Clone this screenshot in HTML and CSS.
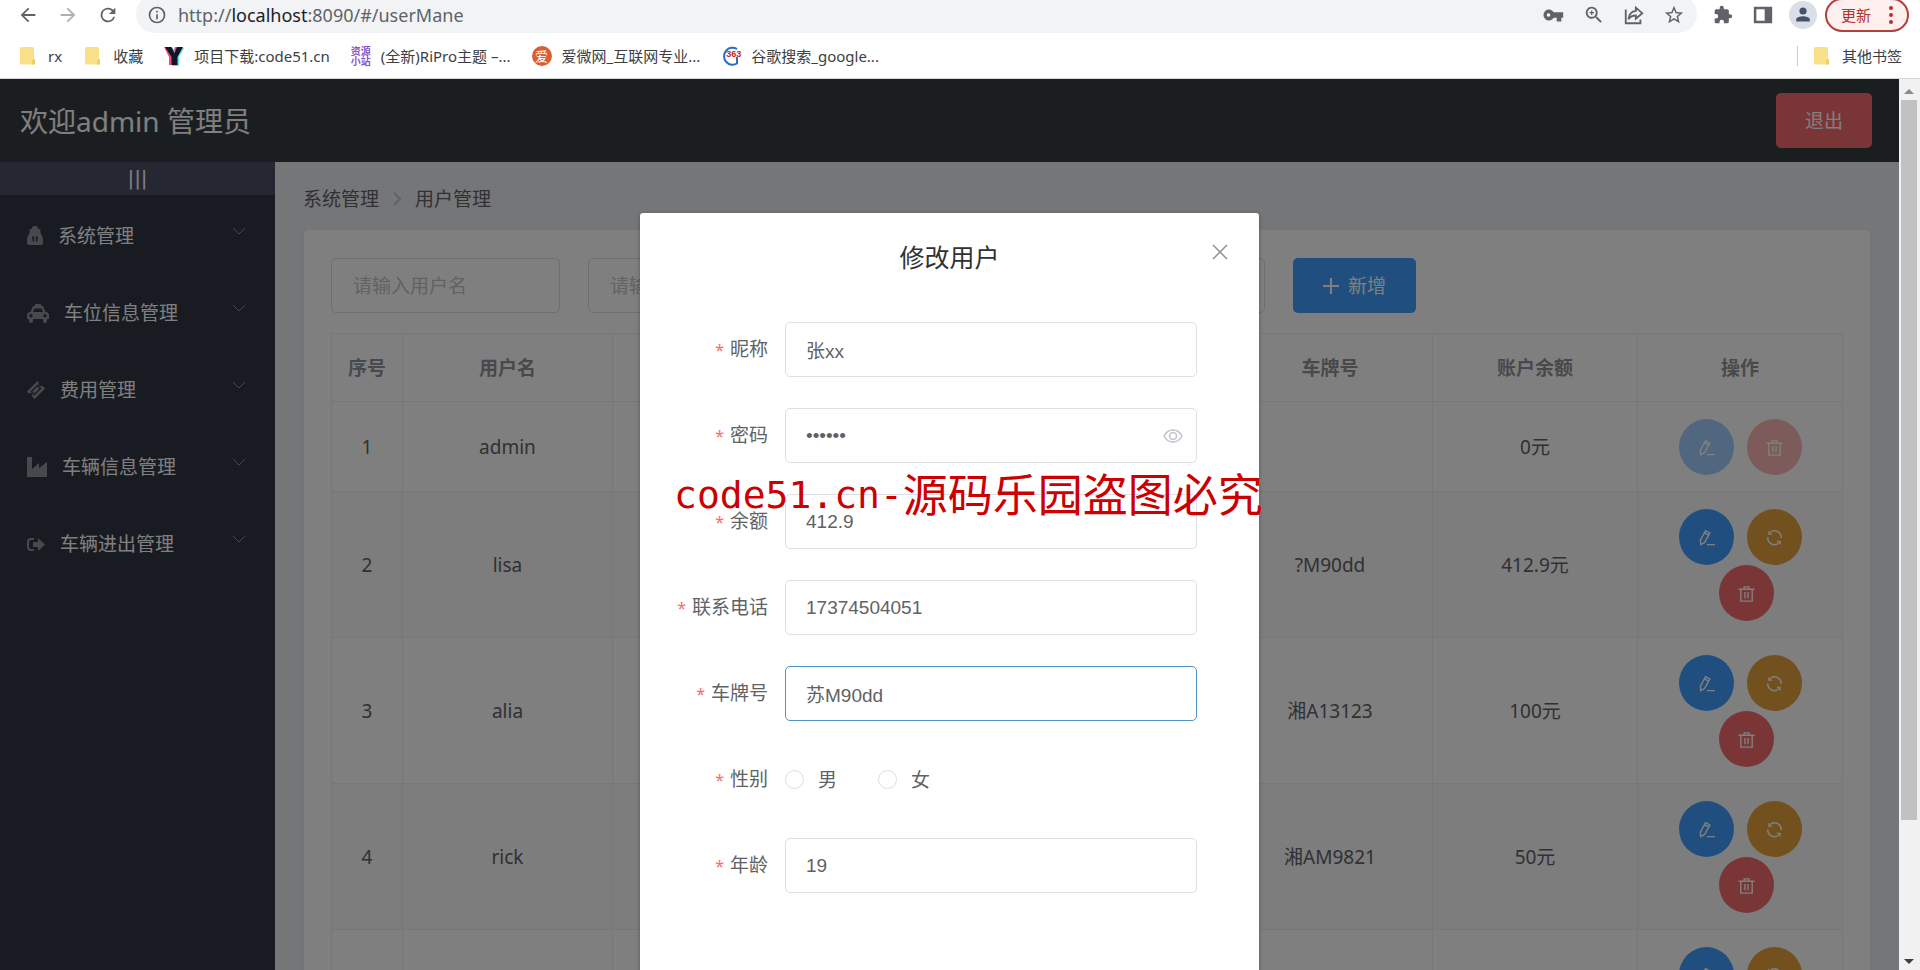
FILE: index.html
```html
<!DOCTYPE html>
<html lang="zh-CN">
<head>
<meta charset="utf-8">
<title>用户管理</title>
<link rel="stylesheet" href="styles.css">
</head>
<body>
<svg class="sprite" aria-hidden="true">
  <symbol id="edit" viewBox="0 0 20 20"><path d="M3.500 13 9 2.800l4.500 2.400L8 15.200l-4 2.300zM7.800 5l4.500 2.400M10.500 17.500h8.500" /></symbol>
  <symbol id="trash" viewBox="0 0 20 20"><path d="M1.500 5.500h17M4 5.500v12.500h12V5.500M7.500 5.500V3h5v2.500M8.400 8.500v6.500M11.600 8.500v6.500" /></symbol>
  <symbol id="refresh" viewBox="0 0 20 20"><path d="M6 4.300A7 7 0 0 1 17 10.500M14 16.200A7 7 0 0 1 3 9.500" /><path d="M3.500 2.500v4.500H8zM16.500 18v-4.500H12z" fill="#fff" stroke="none" /></symbol>
  <symbol id="down" viewBox="0 0 14 14"><path d="M1 4l6 6 6-6" /></symbol>
  <symbol id="folder" viewBox="0 0 20 20"><path d="M3.500 1h11A1.500 1.500 0 0 1 16 2.500V13h1v4.500a1 1 0 0 1-1 1H3.500A1.500 1.500 0 0 1 2 17V2.500A1.500 1.500 0 0 1 3.500 1z" fill="#fbe08a"/><path d="M14 18.500V15l1.500-2H17v4.500a1 1 0 0 1-1 1z" fill="#f0cd62"/></symbol>
</svg>

<header class="browser">
  <div class="toolbar">
    <nav class="nav-buttons">
      <button type="button" aria-label="后退"><svg class="i24" viewBox="0 0 24 24"><path d="M20 11H7.800l5.600-5.600L12 4l-8 8 8 8 1.400-1.400L7.800 13H20z"/></svg></button>
      <button type="button" class="off" aria-label="前进"><svg class="i24" viewBox="0 0 24 24"><path d="M4 11h12.200l-5.600-5.600L12 4l8 8-8 8-1.400-1.400 5.600-5.600H4z"/></svg></button>
      <button type="button" aria-label="刷新"><svg class="i24" viewBox="0 0 24 24"><path d="M17.650 6.350A8 8 0 1 0 19.730 14h-2.080A6 6 0 1 1 12 6c1.660 0 3.140.69 4.220 1.780L13 11h7V4z"/></svg></button>
    </nav>
    <div class="omnibox">
      <svg class="i20" viewBox="0 0 24 24"><path d="M11 7h2v2h-2zm0 4h2v6h-2zm1-9a10 10 0 1 0 0 20 10 10 0 0 0 0-20zm0 18a8 8 0 1 1 0-16 8 8 0 0 1 0 16z"/></svg>
      <div class="url">http://<b>localhost</b>:8090/#/userMane</div>
      <svg class="i22" viewBox="1 0 24 24"><path d="M12.650 9A6 6 0 1 0 12.650 15H16v4h5v-4h2V9zM7 14a2 2 0 1 1 0-4 2 2 0 0 1 0 4z"/></svg>
      <svg class="i22" viewBox="0 0 24 24"><path d="M15.500 14h-.79l-.28-.27A6.500 6.500 0 1 0 13.730 14.430l.27.28v.79l5 5 1.500-1.500zm-6 0a4.500 4.500 0 1 1 0-9 4.500 4.500 0 0 1 0 9zM10.200 7H8.800v1.800H7v1.400h1.800V12h1.400v-1.800H12V8.800h-1.800z"/></svg>
      <svg class="i22 line" viewBox="0 0 24 24"><path d="M3 6v15h16v-4M14 4l7 6-7 6v-3.500c-4 0-6 1-8 4 .5-5 3-8.500 8-9z"/></svg>
      <svg class="i22" viewBox="0 0 24 24"><path d="M22 9.240l-7.190-.62L12 2 9.190 8.630 2 9.240l5.460 4.730L5.820 21 12 17.270 18.180 21l-1.630-7.030zM12 15.400l-3.760 2.270 1-4.280-3.320-2.880 4.380-.38L12 6.100l1.710 4.040 4.380.38-3.320 2.880 1 4.280z"/></svg>
    </div>
    <div class="tools">
      <svg class="i20" viewBox="0 0 24 24"><path d="M20.500 11H19V7a2 2 0 0 0-2-2h-4V3.500a2.500 2.500 0 0 0-5 0V5H4a2 2 0 0 0-2 2v3.800h1.500a2.700 2.700 0 0 1 0 5.400H2V20a2 2 0 0 0 2 2h3.800v-1.500a2.700 2.700 0 0 1 5.400 0V22H17a2 2 0 0 0 2-2v-4h1.500a2.500 2.500 0 0 0 0-5z"/></svg>
      <svg class="i20" viewBox="0 0 24 24"><path fill-rule="evenodd" d="M1 2h22v20H1zM4 5v14h10V5z"/></svg>
      <span class="avatar"><svg class="i20" viewBox="0 0 20 20"><circle cx="10" cy="5" r="4.500"/><path d="M1.500 18v-2.500c0-3 5.500-4 8.500-4s8.500 1 8.500 4V18z"/></svg></span>
      <button type="button" class="update">更新<svg viewBox="0 0 4 18"><circle cx="2" cy="2" r="2"/><circle cx="2" cy="9" r="2"/><circle cx="2" cy="16" r="2"/></svg></button>
    </div>
  </div>
  <nav class="bookmarks">
    <a href="#"><svg class="i20"><use href="#folder"/></svg>rx</a>
    <a href="#"><svg class="i20"><use href="#folder"/></svg>收藏</a>
    <a href="#"><svg class="i20" viewBox="0 0 20 20"><path d="M0 1h7l2 5.500L11 1h6l-4.500 10v8H5v-8z" fill="#f2497e"/><path d="M3 2h6l2.500 5L14 2h6l-5 9v9H8v-9z" fill="#5fe0ee"/><path d="M1 1h6.500l3 6L13 1h6l-5.500 10v8h-6v-8z" fill="#151426"/></svg>项目下载:code51.cn</a>
    <a href="#"><span class="stack">资源<br>小站</span>(全新)RiPro主题 –...</a>
    <a href="#"><span class="round">爱</span>爱微网_互联网专业...</a>
    <a href="#"><span class="g363"><svg class="i20" viewBox="0 0 20 20"><path d="M16 3A8.500 8.500 0 1 0 16 17.500V11" fill="none" stroke="#2a6bd0" stroke-width="2"/></svg><i>363</i></span>谷歌搜索_google...</a>
    <a href="#" class="other"><svg class="i20"><use href="#folder"/></svg>其他书签</a>
  </nav>
</header>

<div class="viewport">
  <div class="app">
    <header class="app-head">
      <span>欢迎admin 管理员</span>
      <button type="button" class="btn danger">退出</button>
    </header>
    <div class="app-body">
      <aside class="side">
        <button type="button" class="toggle">|||</button>
        <ul class="menu">
          <li><svg class="w16" viewBox="0 0 16 20"><path fill-rule="evenodd" d="M5 1.500C5.500.5 6.500 0 8 0s2.500.5 3 1.500V3h2.500v2H13c.3 1.500.8 2.500 1.500 4C15.500 10.500 16 12 16 14v3c0 1.200-.8 2-2 2H2c-1.200 0-2-.8-2-2v-3c0-2 .5-3.500 1.500-5C2.200 7.500 2.700 6.500 3 5h-.5V3H5zM5 10.500l.8 5h1.400v-5zm3.800 0v5h1.400l.8-5z"/></svg>系统管理<svg class="arrow"><use href="#down"/></svg></li>
          <li><svg class="w22" viewBox="0 0 22 20"><path fill-rule="evenodd" d="M8 1h6v2h2l2.500 6A3.500 3.500 0 0 1 22 12v4h-2v2a2 2 0 0 1-4 0v-2H6v2a2 2 0 0 1-4 0v-2H0v-4a3.500 3.500 0 0 1 3.500-3L6 3h2zM7.500 5.500 6 9h10l-1.500-3.500zM4 11a1.700 1.700 0 1 0 0 3.400A1.700 1.700 0 0 0 4 11zm14 0a1.700 1.700 0 1 0 0 3.400 1.700 1.700 0 0 0 0-3.400z"/></svg>车位信息管理<svg class="arrow"><use href="#down"/></svg></li>
          <li><svg class="w18" viewBox="0 0 18 18"><path fill-rule="evenodd" d="M10.500 0 12 1.500a2 2 0 0 0 3 3L18 7.500 7.500 18 5 15.500a2 2 0 0 0-3-3L0 10.500zM10.500 3.500 3.500 10.500 7.500 14.500 14.500 7.500zM10.500 5.500l2 2-5 5-2-2z"/></svg>费用管理<svg class="arrow"><use href="#down"/></svg></li>
          <li><svg class="w20" viewBox="0 0 20 20"><path d="M0 0h5v12l7-6v5l8-6v15H0z"/></svg>车辆信息管理<svg class="arrow"><use href="#down"/></svg></li>
          <li><svg class="w18" viewBox="0 0 18 18"><path d="M7 3v2H4a2 2 0 0 0-2 2v5a2 2 0 0 0 2 2h3v2H4a4 4 0 0 1-4-4V7a4 4 0 0 1 4-4zM11 3l7 6.500-7 6.500v-4H6V7h5z"/></svg>车辆进出管理<svg class="arrow"><use href="#down"/></svg></li>
        </ul>
      </aside>
      <main class="main">
        <nav class="crumbs"><a href="#">系统管理</a><svg viewBox="0 0 10 16"><path d="M2 2l6 6-6 6"/></svg><span>用户管理</span></nav>
        <section class="card">
          <form class="filters">
            <input type="text" aria-label="用户名" placeholder="请输入用户名">
            <input type="text" aria-label="条件" placeholder="请输入">
            <button type="button" class="btn primary"><svg viewBox="0 0 16 16"><path d="M8 0v16M0 8h16"/></svg>新增</button>
          </form>
          <table class="grid">
            <colgroup><col class="c-no"><col class="c-name"><col><col><col><col><col><col></colgroup>
            <thead><tr><th>序号</th><th>用户名</th><th></th><th></th><th></th><th>车牌号</th><th>账户余额</th><th>操作</th></tr></thead>
            <tbody>
              <tr><td>1</td><td>admin</td><td></td><td></td><td></td><td></td><td>0元</td><td><div class="ops"><button type="button" class="op blue" disabled aria-label="编辑"><svg><use href="#edit"/></svg></button><button type="button" class="op red" disabled aria-label="删除"><svg><use href="#trash"/></svg></button></div></td></tr>
              <tr><td>2</td><td>lisa</td><td></td><td></td><td></td><td>?M90dd</td><td>412.9元</td><td><div class="ops"><button type="button" class="op blue" aria-label="编辑"><svg><use href="#edit"/></svg></button><button type="button" class="op gold" aria-label="重置"><svg><use href="#refresh"/></svg></button><button type="button" class="op red" aria-label="删除"><svg><use href="#trash"/></svg></button></div></td></tr>
              <tr><td>3</td><td>alia</td><td></td><td></td><td></td><td>湘A13123</td><td>100元</td><td><div class="ops"><button type="button" class="op blue" aria-label="编辑"><svg><use href="#edit"/></svg></button><button type="button" class="op gold" aria-label="重置"><svg><use href="#refresh"/></svg></button><button type="button" class="op red" aria-label="删除"><svg><use href="#trash"/></svg></button></div></td></tr>
              <tr><td>4</td><td>rick</td><td></td><td></td><td></td><td>湘AM9821</td><td>50元</td><td><div class="ops"><button type="button" class="op blue" aria-label="编辑"><svg><use href="#edit"/></svg></button><button type="button" class="op gold" aria-label="重置"><svg><use href="#refresh"/></svg></button><button type="button" class="op red" aria-label="删除"><svg><use href="#trash"/></svg></button></div></td></tr>
              <tr><td></td><td></td><td></td><td></td><td></td><td></td><td></td><td><div class="ops"><button type="button" class="op blue" aria-label="编辑"><svg><use href="#edit"/></svg></button><button type="button" class="op gold" aria-label="重置"><svg><use href="#refresh"/></svg></button><button type="button" class="op red" aria-label="删除"><svg><use href="#trash"/></svg></button></div></td></tr>
            </tbody>
          </table>
        </section>
      </main>
    </div>

    <div class="overlay">
      <div class="dialog" role="dialog" aria-labelledby="dlg-title">
        <h2 id="dlg-title">修改用户</h2>
        <button type="button" class="close" aria-label="关闭"><svg viewBox="0 0 16 16"><path d="M1 1l14 14M15 1 1 15"/></svg></button>
        <form class="form">
          <div class="row"><label for="nick">昵称</label><input id="nick" type="text" value="张xx"></div>
          <div class="row"><label for="pwd">密码</label><input id="pwd" type="password" value="123456"><svg class="eye" viewBox="0 0 20 20"><path d="M1 10c4-8 14-8 18 0-4 8-14 8-18 0z"/><circle cx="10" cy="10" r="3.500"/></svg></div>
          <div class="row"><label for="bal">余额</label><input id="bal" type="text" value="412.9"></div>
          <div class="row"><label for="tel">联系电话</label><input id="tel" type="text" value="17374504051"></div>
          <div class="row"><label for="plate">车牌号</label><input id="plate" class="active" type="text" value="苏M90dd"></div>
          <div class="row"><span class="label">性别</span><div class="radios"><label><input type="radio" name="sex">男</label><label><input type="radio" name="sex">女</label></div></div>
          <div class="row"><label for="age">年龄</label><input id="age" type="text" value="19"></div>
        </form>
        <p class="mark"><span>code51.cn-</span>源码乐园盗图必究</p>
      </div>
    </div>
  </div>
  <div class="scrollbar"><svg viewBox="0 0 10 6"><path d="M0 6l5-5 5 5z" fill="#8a8a8a"/></svg><div class="thumb"></div><svg viewBox="0 0 10 6"><path d="M0 0l5 5 5-5z" fill="#404040"/></svg></div>
</div>
</body>
</html>
```

FILE: styles.css
```css
* { box-sizing: border-box; }
body {
  margin: 0;
  height: 100vh;
  display: flex;
  flex-direction: column;
  overflow: hidden;
  background: #fff;
  font: 19px/26px "Noto Sans", "Noto Sans CJK SC", sans-serif;
  color: #606266;
}
button, input { font: inherit; }
button { border: 0; padding: 0; background: none; cursor: pointer; }
a { color: inherit; text-decoration: none; }
ul { list-style: none; margin: 0; padding: 0; }
.sprite { position: absolute; width: 0; height: 0; }
.i20 { width: 20px; height: 20px; flex: none; }
.i22 { width: 22px; height: 22px; flex: none; }
.i24 { width: 22px; height: 22px; display: block; }

/* browser bars */
.browser { flex: none; border-bottom: 1px solid #d5d5d5; }
.toolbar { height: 33px; display: flex; overflow: hidden; fill: #5f6368; }
.nav-buttons { display: flex; gap: 18px; padding: 0 17px 3px; align-items: center; }
.nav-buttons .off { opacity: .5; }
.omnibox {
  flex: 1;
  display: flex;
  align-items: center;
  gap: 18px;
  margin-top: -5px;
  padding: 2px 12px 0 11px;
  border-radius: 19px;
  background: #f1f3f4;
}
.url { flex: 1; margin-left: -7px; font-size: 18px; color: #5f6368; }
.url b { font-weight: 400; color: #202124; }
.line { fill: none; stroke: #5f6368; stroke-width: 2; }
.tools { display: flex; align-items: center; gap: 20px; padding: 0 11px 3px 16px; }
.avatar { width: 28px; height: 28px; margin: 0 -12px 0 -4px; border-radius: 50%; background: #dadee6; display: grid; place-items: center; fill: #45526b; }
.avatar .i20 { width: 16px; height: 16px; }
.update {
  height: 34px;
  width: 84px;
  flex: none;
  display: flex;
  align-items: center;
  justify-content: center;
  gap: 18px;
  border: 2px solid #b3403c;
  border-radius: 17px;
  background: #fcefee;
  color: #b3312c;
  font-size: 15px;
  fill: #b3312c;
}
.update svg { width: 4px; height: 18px; }
.bookmarks { height: 45px; display: flex; align-items: center; gap: 21px; padding: 0 18px; font-size: 15px; color: #3c4043; }
.bookmarks a { display: flex; align-items: center; gap: 10px; white-space: nowrap; }
.bookmarks .other { margin-left: auto; border-left: 1px solid #ccc; padding-left: 14px; line-height: 20px; }
.stack { width: 20px; font-size: 10px; line-height: 10px; font-weight: 700; color: #8a55c8; }
.round { width: 20px; height: 20px; border-radius: 50%; background: #d95f32; color: #fff; font-size: 13px; line-height: 20px; text-align: center; }
.g363 { display: grid; width: 20px; }
.g363 > * { grid-area: 1 / 1; }
.g363 i { font: 700 9px/17px "Liberation Sans", sans-serif; color: #c3262e; justify-self: end; }

/* app */
.viewport { flex: 1; min-height: 0; display: flex; }
.app { flex: 1; min-width: 0; position: relative; overflow: hidden; display: flex; flex-direction: column; }
.app-head {
  flex: none;
  display: flex;
  justify-content: space-between;
  align-items: center;
  padding: 14px 27px 14px 20px;
  background: #373d41;
  color: #fff;
  font-size: 28px;
  line-height: 36px;
}
.btn { height: 55px; padding: 0 29px; border-radius: 5px; color: #fff; font-size: 19px; }
.btn.danger { background: #f56c6c; }
.btn.primary { background: #409eff; display: flex; align-items: center; gap: 9px; padding: 0 30px; }
.btn.primary svg { width: 16px; height: 16px; stroke: #fff; stroke-width: 2; }
.app-body { flex: 1; min-height: 0; display: flex; }
.side { width: 275px; flex: none; background: #333744; }
.toggle { display: block; width: 100%; height: 33px; background: #4a5064; color: #fff; font: 20px/33px "DejaVu Sans", sans-serif; }
.menu { padding-top: 2px; }
.menu li { height: 77px; display: flex; align-items: center; padding: 0 29px 0 27px; color: #fff; }
.menu li > svg:first-child { fill: #909399; margin-right: 15px; height: 20px; }
.menu .arrow { width: 14px; height: 14px; margin: 0 0 10px auto; fill: none; stroke: #909399; stroke-width: 1; }
.w16 { width: 16px; }
.w18 { width: 18px; }
.w20 { width: 20px; }
.w22 { width: 22px; }
.main { flex: 1; min-width: 0; padding: 24px 28px; background: #eaedf1; }
.crumbs { display: flex; align-items: center; gap: 13px; height: 26px; margin-bottom: 17px; }
.crumbs svg { width: 10px; height: 16px; fill: none; stroke: #c0c4cc; stroke-width: 2; }
.card { padding: 28px 27px; border: 1px solid #ebeef5; border-radius: 5px; background: #fff; box-shadow: 0 1px 3px rgba(0,0,0,.1); }
.filters { display: flex; gap: 28px; margin-bottom: 20px; }
.filters input { width: 229px; height: 55px; border: 1px solid #dcdfe6; border-radius: 5px; padding: 0 21px; }
.filters input:nth-child(2) { width: 677px; }
.filters input::placeholder { color: #c0c4cc; }
.grid { width: 100%; table-layout: fixed; border-collapse: collapse; text-align: center; }
.c-no { width: 71px; }
.c-name { width: 210px; }
.grid th, .grid td { border: 1px solid #ebeef5; padding: 17px 0 16px; }
.grid th { height: 68px; color: #909399; font-weight: 700; }
.grid tbody tr:nth-child(even) { background: #fafafa; }
.ops { display: flex; flex-wrap: wrap; justify-content: center; width: 150px; margin: 0 auto; }
.op { width: 55px; height: 56px; border-radius: 50%; display: grid; place-items: center; }
.op + .op { margin-left: 13px; }
.op svg { width: 19px; height: 19px; fill: none; stroke: #fff; stroke-width: 1.5; }
.blue { background: #409eff; }
.gold { background: #e6a23c; }
.red { background: #f56c6c; }
.blue:disabled { background: #a0cfff; }
.red:disabled { background: #fab6b6; }

/* dialog */
.overlay { position: absolute; inset: 0; background: rgba(0,0,0,.5); }
.dialog { position: relative; width: 619px; min-height: 100%; margin: 134px auto 0; padding: 28px 62px; border-radius: 3px; background: #fff; box-shadow: 0 1px 4px rgba(0,0,0,.3); }
.dialog h2 { margin: 0 0 49px; font-size: 25px; font-weight: 400; line-height: 32px; text-align: center; color: #303133; }
.close { position: absolute; top: 31px; right: 31px; }
.close svg { display: block; width: 16px; height: 16px; stroke: #909399; stroke-width: 1.5; }
.form { display: grid; gap: 31px; margin-left: -42px; }
.row { display: flex; align-items: center; height: 55px; position: relative; }
.row > label, .label { width: 125px; padding-right: 17px; text-align: right; white-space: nowrap; }
.row > label::before, .label::before { content: "*"; color: #f56c6c; font-size: 16px; margin-right: 6px; }
.row > input {
  flex: 1;
  min-width: 0;
  height: 55px;
  padding: 0 20px;
  border: 1px solid #dcdfe6;
  border-radius: 5px;
  color: #606266;
  font-family: "Liberation Sans", "Noto Sans CJK SC", sans-serif;
}
.row > input.active { border-color: #4f94c4; }
.eye { position: absolute; right: 14px; width: 20px; height: 20px; fill: none; stroke: #c0c4cc; stroke-width: 1.5; }
.radios { display: flex; gap: 41px; }
.radios label { display: flex; align-items: center; gap: 14px; }
.radios input { appearance: none; width: 19px; height: 19px; margin: 0; border: 1px solid #dcdfe6; border-radius: 50%; }
.mark { position: absolute; left: 34px; top: 254px; margin: 0; display: flex; align-items: center; font-size: 45px; line-height: 56px; white-space: nowrap; color: #c00; }
.mark span { font-family: "DejaVu Sans Mono", monospace; font-size: 38px; }

/* scrollbar */
.scrollbar { flex: none; width: 21px; padding: 9px 3px 5px 2px; background: #f1f1f1; display: flex; flex-direction: column; align-items: center; }
.scrollbar svg { width: 10px; height: 6px; flex: none; }
.thumb { width: 16px; height: 720px; margin: 6px 0 auto; background: #c1c1c1; }
```
